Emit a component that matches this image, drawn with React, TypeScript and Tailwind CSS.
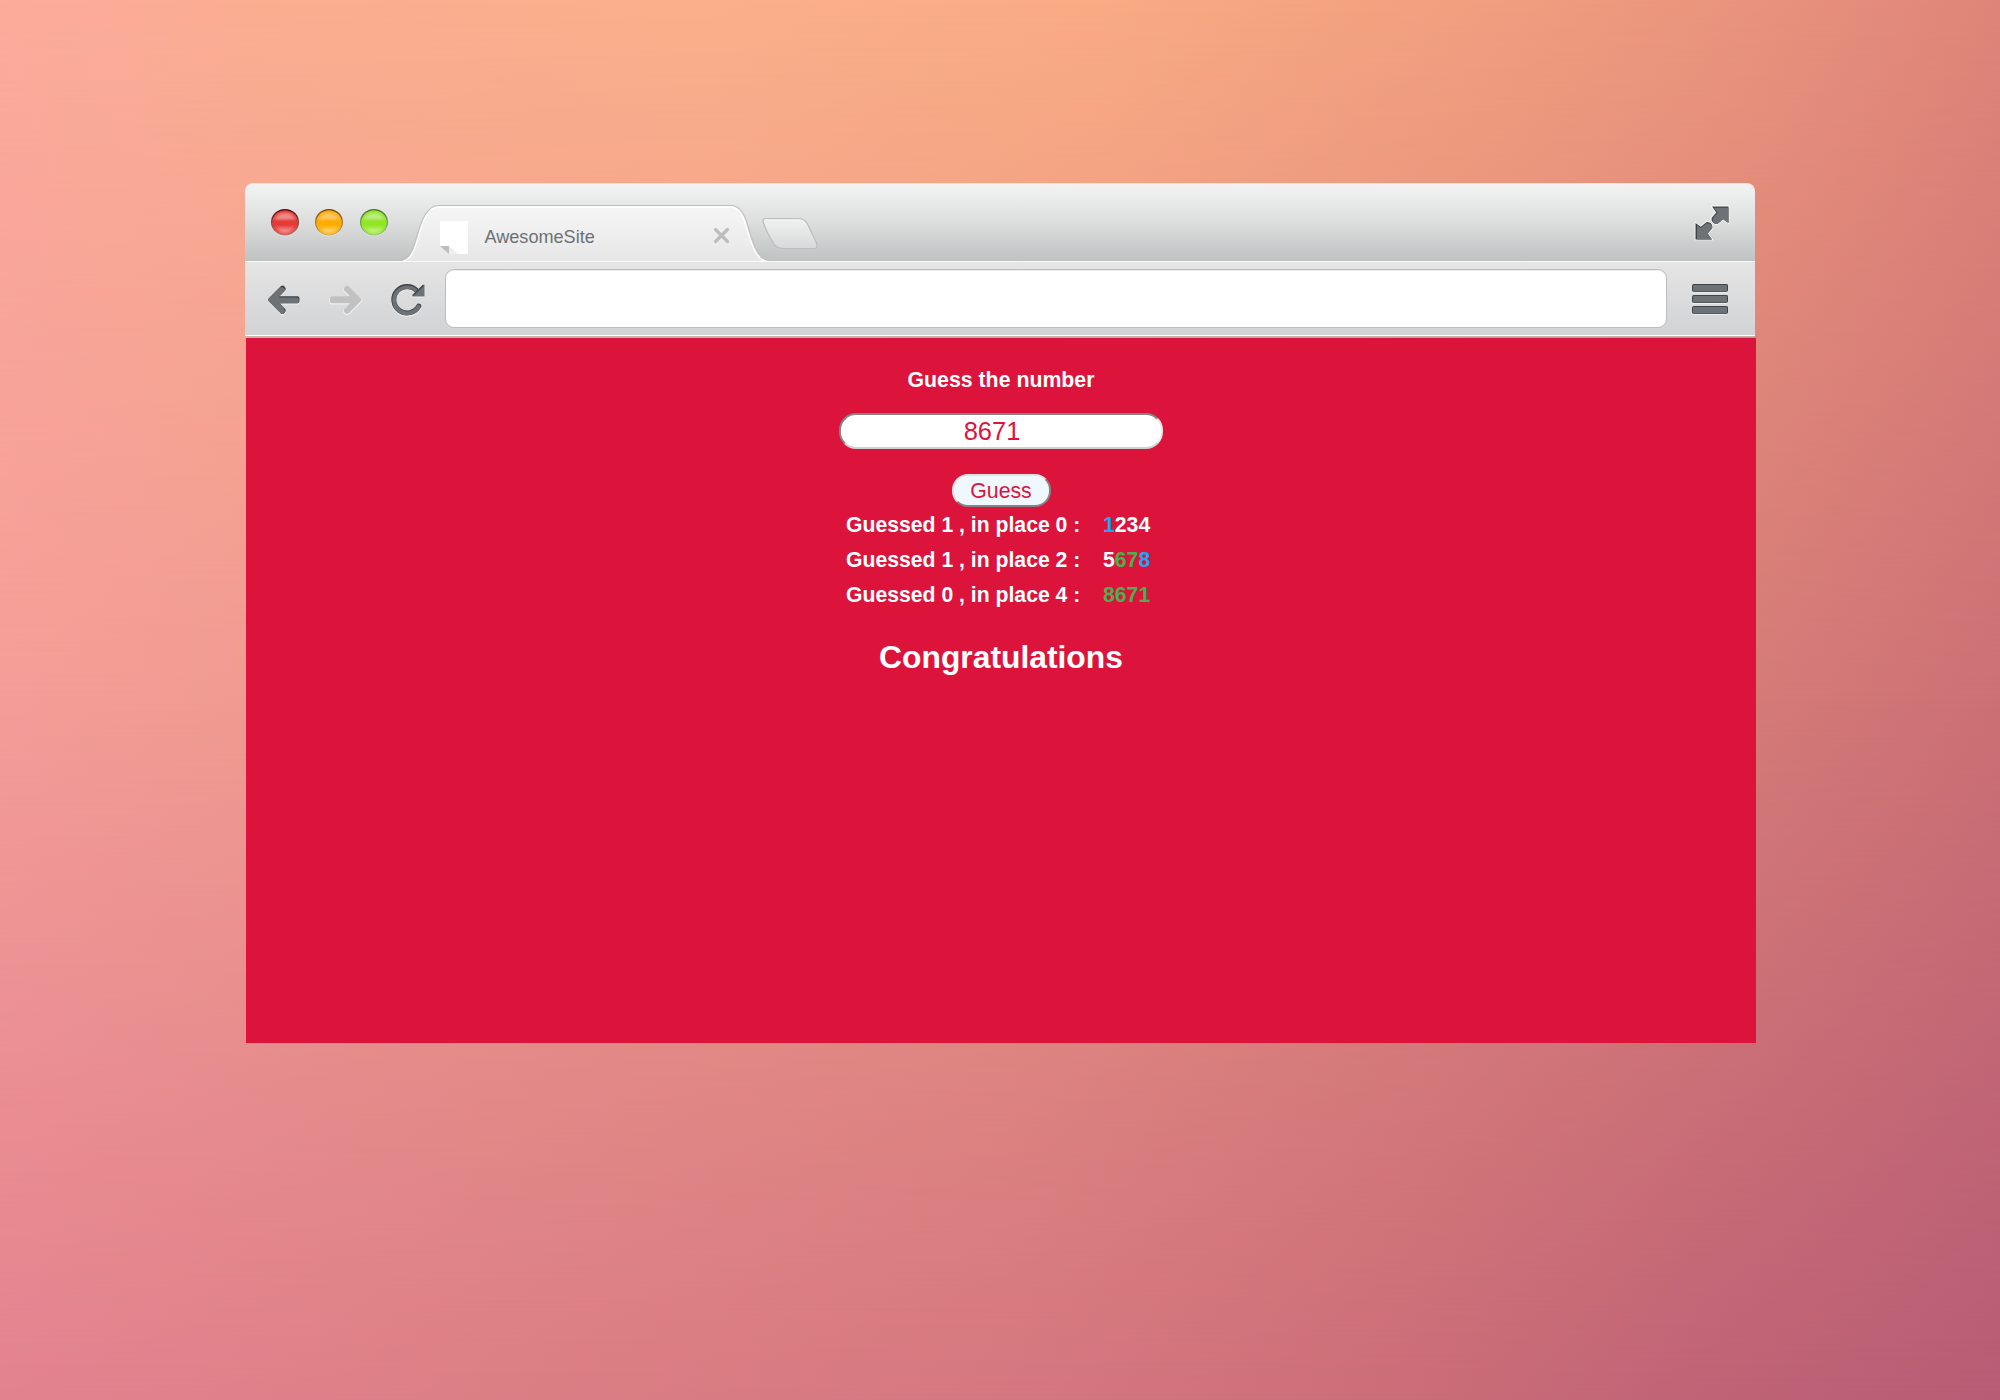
import React from "react";

type Tone = "white" | "blue" | "green";

const toneClass: Record<Tone, string> = {
  white: "text-white",
  blue: "text-[#1ea5fa]",
  green: "text-[#4caf50]",
};

const guesses: { label: string; digits: [string, Tone][] }[] = [
  { label: "Guessed 1 , in place 0 :", digits: [["1", "blue"], ["2", "white"], ["3", "white"], ["4", "white"]] },
  { label: "Guessed 1 , in place 2 :", digits: [["5", "white"], ["6", "green"], ["7", "green"], ["8", "blue"]] },
  { label: "Guessed 0 , in place 4 :", digits: [["8", "green"], ["6", "green"], ["7", "green"], ["1", "green"]] },
];

function Backdrop() {
  return (
    <div className="absolute inset-0">
      <div className="absolute inset-0 bg-[linear-gradient(90deg,#fcab9c_0%,#fbae92_12%,#fbb08b_35%,#f9ab84_55%,#f09e7f_75%,#e9937d_88%,#df8579_100%)]" />
      <div className="absolute inset-0 bg-[linear-gradient(90deg,#f49d98_0%,#ef9a90_15%,#e79282_50%,#d77d78_85%,#cc7075_100%)] [mask-image:linear-gradient(180deg,transparent_0%,black_50%)]" />
      <div className="absolute inset-0 bg-[linear-gradient(90deg,#e3828f_0%,#db7e85_25%,#d57780_50%,#cb6d78_70%,#c06376_85%,#b75c75_100%)] [mask-image:linear-gradient(180deg,transparent_50%,black_100%)]" />
    </div>
  );
}

function Light({ id, rim, rimLow, mid, top, glow }: { id: string; rim: string; rimLow: string; mid: string; top: string; glow: string }) {
  return (
    <svg width="28" height="28" viewBox="0 0 28 28">
      <defs>
        <linearGradient id={id + "r"} x1="0" y1="0" x2="0" y2="1">
          <stop offset="0" stopColor={rim} />
          <stop offset="1" stopColor={rimLow} />
        </linearGradient>
        <linearGradient id={id + "f"} x1="0" y1="0" x2="0" y2="1">
          <stop offset="0" stopColor={mid} />
          <stop offset="0.12" stopColor={top} />
          <stop offset="0.3" stopColor={top} />
          <stop offset="0.45" stopColor={mid} />
          <stop offset="0.6" stopColor={mid} />
          <stop offset="0.92" stopColor={glow} />
        </linearGradient>
        <radialGradient id={id + "v"}>
          <stop offset="0.65" stopColor={mid} stopOpacity="0" />
          <stop offset="1" stopColor={mid} stopOpacity="0.9" />
        </radialGradient>
      </defs>
      <ellipse cx="14" cy="14" rx="14" ry="13.4" fill="#fff" opacity="0.35" />
      <ellipse cx="14" cy="13.2" rx="14" ry="13.2" fill={`url(#${id}r)`} />
      <ellipse cx="14" cy="13.6" rx="12.6" ry="12" fill={`url(#${id}f)`} />
      <ellipse cx="14" cy="13.6" rx="12.6" ry="12" fill={`url(#${id}v)`} />
    </svg>
  );
}

function Tab() {
  return (
    <div className="relative ml-[8px] h-[58px] w-[374px] shrink-0">
      <svg className="absolute left-0 top-0" width="374" height="60" viewBox="395 204 374 60">
        <defs>
          <linearGradient id="tabFill" x1="0" y1="0" x2="0" y2="1">
            <stop offset="0" stopColor="#f6f6f6" />
            <stop offset="1" stopColor="#e6e6e6" />
          </linearGradient>
        </defs>
        <path d="M395 260.700 H398 C406 260.700 410 254 412.500 247 C417 235 418 225 424 215 C428 208 432 205.500 438 205.500 H730 C738 205.500 742 212 745 220 C749 232 751 243 756.500 252 C760 258 764 260.700 769 260.700 V264 H395Z" fill="url(#tabFill)" />
        <path d="M395 262 H398 C407 262 411.500 255 414 247.500 C418.500 235.500 419.500 226 425 216.500 C429 209 432.500 207 438 207 H730 C737 207 740.500 213 743.500 221 C747.500 233 749.500 244 755 253 C758.500 259 763 262 769 262" fill="none" stroke="#fff" strokeWidth="1.300" />
        <path d="M395 260.700 H398 C406 260.700 410 254 412.500 247 C417 235 418 225 424 215 C428 208 432 205.500 438 205.500 H730 C738 205.500 742 212 745 220 C749 232 751 243 756.500 252 C760 258 764 260.700 769 260.700" fill="none" stroke="#bdbdbd" strokeWidth="1.100" />
      </svg>
      <div className="relative flex h-full items-start pl-[44px]">
        <svg className="mt-[17px] shrink-0" width="28" height="33" viewBox="0 0 28 33">
          <path d="M0 0H28V33H17.500L9 25H0Z" fill="#fff" />
          <path d="M9 25L17.500 33H9Z" fill="#edf0ef" />
          <path d="M0 25H9V33Z" fill="#bdbebe" />
        </svg>
        <span className="ml-[17px] mt-[22px] w-[228px] text-[18.100px] leading-[22px] text-[#6b7175]">AwesomeSite</span>
        <svg className="mt-[23px] shrink-0" width="17" height="17" viewBox="0 0 17 17">
          <path d="M2.500 2.500L14.500 14.500M14.500 2.500L2.500 14.500" stroke="#bdbdbd" strokeWidth="3.200" strokeLinecap="round" />
        </svg>
      </div>
    </div>
  );
}

function NewTabButton() {
  return (
    <svg className="-ml-[9px] mt-[13px] shrink-0" width="58" height="34" viewBox="761 217 58 34">
      <defs>
        <linearGradient id="newTab" x1="0" y1="0" x2="0" y2="1">
          <stop offset="0" stopColor="#f1f1f1" />
          <stop offset="1" stopColor="#d7d9da" />
        </linearGradient>
      </defs>
      <path d="M766 218.500 H798 Q804.500 218.500 807.500 224 L816.500 243 Q818.500 248.500 814 248.500 H783 Q776 248.500 773 242.500 Q766 231 763.500 223 Q762 218.500 766 218.500Z" fill="url(#newTab)" stroke="#bcbcbc" strokeWidth="1.200" />
    </svg>
  );
}

function FullscreenIcon() {
  const up = "M16.500 0H33V16.500L27.600 12.700L22.200 17.200C19 18.200 15.200 15 16.200 11.200L20.800 5.900Z";
  const down = "M16.500 33H0V16.500L5.400 20.300L10.800 15.800C14 14.800 17.800 18 16.800 21.800L12.200 27.100Z";
  return (
    <svg width="36" height="36" viewBox="-1.500 -1.500 36 36">
      <path d={up} fill="#fff" stroke="#fff" strokeWidth="1.600" />
      <path d={down} fill="#fff" stroke="#fff" strokeWidth="1.600" />
      <path d={up} fill="#3c4044" />
      <path d={down} fill="#3c4044" />
      <path d="M18.500 1.300H33V16.500L27.600 12.700L22.200 17.200C19 18.200 16.800 15 17.200 11.700L22 6.200Z" fill="#6c7276" />
      <path d="M16.500 33H1.500V18.500L5.400 21.500L10.800 16.900C14 16 17.200 18.500 16.600 21.800L12.200 27.100Z" fill="#6c7276" />
    </svg>
  );
}

const ARROW = "M0.800 13.200L13 1Q14.800 -0.200 16.500 1.600Q18.600 3.600 17.400 5.200L11.600 11.200H29.500Q31.500 11.200 31.500 13.200V16.200Q31.500 18.200 29.500 18.200H11.600L17.400 24.300Q18.600 25.900 16.500 27.900Q14.800 29.700 13 28.500L0.800 16.300Q-0.500 14.750 0.800 13.200Z";

function BackIcon() {
  return (
    <svg width="34" height="33" viewBox="-1 -1 34 33">
      <defs>
        <clipPath id="backClip"><path d={ARROW} /></clipPath>
      </defs>
      <path d={ARROW} transform="translate(0 0.900)" fill="#f2f2f2" stroke="#f2f2f2" strokeWidth="0.800" />
      <path d={ARROW} fill="#3c4044" />
      <g clipPath="url(#backClip)">
        <path d={ARROW} transform="translate(-0.700 1.400)" fill="#6c7276" />
        <path d="M0 14H14L17 29H0Z" fill="#6c7276" />
      </g>
    </svg>
  );
}

function ForwardIcon() {
  return (
    <svg width="34" height="33" viewBox="-1 -1 34 33">
      <g transform="translate(31.500 0) scale(-1 1)">
        <path d={ARROW} transform="translate(0 0.700)" fill="#f0f0f0" stroke="#f0f0f0" strokeWidth="1.200" />
        <path d={ARROW} fill="#c1c1c1" />
      </g>
    </svg>
  );
}

function ReloadIcon() {
  const arc = "M26.800 22A13.300 13.300 0 1 1 25 6.800";
  const head = "M32.500 0.800V12.600H20.500V10.900L31 0.800Z";
  return (
    <svg width="35" height="34" viewBox="-1 -1 35 34">
      <g transform="translate(0 0.900)">
        <path d={arc} fill="none" stroke="#f2f2f2" strokeWidth="5.600" strokeLinecap="round" />
        <path d={head} fill="#f2f2f2" />
      </g>
      <path d={arc} fill="none" stroke="#3c4044" strokeWidth="5" strokeLinecap="round" />
      <path d="M26.600 22.500A13 13 0 1 1 25 7.800" fill="none" stroke="#6c7276" strokeWidth="3.800" strokeLinecap="round" />
      <path d={head} fill="#6c7276" />
      <path d="M20.800 11.500L31.500 1.300" stroke="#3c4044" strokeWidth="1.200" />
    </svg>
  );
}

function MenuIcon() {
  return (
    <div className="flex w-[36px] flex-col gap-[3px]">
      {[0, 1, 2].map((i) => (
        <div key={i} className="h-[8px] rounded-[2px] border border-b-[#55595c] border-[#3f4347] bg-[#6c7276] shadow-[0_1px_0_#ececec]" />
      ))}
    </div>
  );
}

function TabStrip() {
  return (
    <div className="flex h-[78px] rounded-t-[8px] border-t border-[#f4e6df] bg-linear-to-b from-[#f3f3f3] via-[#dcdedd] to-[#bfc2c2]">
      <div className="flex gap-[16.500px] pl-[25.500px] pt-[25px]">
        <Light id="lr" rim="#4a0608" rimLow="#b87573" mid="#e53a37" top="#ee8a87" glow="#f5aaa7" />
        <Light id="ly" rim="#744408" rimLow="#c9a564" mid="#ffab00" top="#fdc763" glow="#ffe08e" />
        <Light id="lg" rim="#47702c" rimLow="#9ab982" mid="#90e622" top="#b8ec80" glow="#cff79c" />
      </div>
      <div className="flex pt-[20px]">
        <Tab />
        <NewTabButton />
      </div>
      <div className="ml-auto pr-[25px] pt-[20.500px]">
        <FullscreenIcon />
      </div>
    </div>
  );
}

function Toolbar() {
  return (
    <div className="relative flex h-[76px] border-t border-[#fafafa] bg-linear-to-b from-[#e5e5e5] to-[#d1d2d4]">
      <div className="flex w-[200px] pl-[21.500px] pt-[21.500px]">
        <BackIcon />
        <div className="ml-[28px]"><ForwardIcon /></div>
        <div className="ml-[28px] -mt-[0.500px]"><ReloadIcon /></div>
      </div>
      <div className="mt-[7px] h-[59px] w-[1222px] rounded-[9px] border border-[#bdbdbf] bg-white shadow-[inset_0_1px_0_#ececec]" />
      <div className="ml-auto pr-[27px] pt-[22px]">
        <MenuIcon />
      </div>
      <div className="absolute inset-x-0 bottom-0 h-[2px] border-t border-white bg-[#c6b3ab]" />
    </div>
  );
}

function Game() {
  return (
    <div className="ml-[1px] mt-[1px] flex h-[705px] w-[1510px] flex-col items-center bg-[#dc143c] pt-[30px] text-white">
      <h1 className="text-[21.300px] leading-[24px] font-bold">Guess the number</h1>
      <div className="mt-[21px] flex h-[36px] w-[324px] items-center justify-center rounded-[17px] border-2 border-t-[#858585] border-l-[#858585] border-r-[#e8e8e8] border-b-[#d2d2d2] bg-white pr-[18px] text-[25.500px] leading-[30px] text-[#dc143c]">
        8671
      </div>
      <button className="mt-[25px] flex h-[33px] w-[99px] items-center justify-center rounded-[16px] border-2 border-t-[#e2e2e2] border-l-[#e2e2e2] border-r-[#858585] border-b-[#858585] bg-[#f0f8ff] text-[21.300px] leading-[24px] text-[#dc143c]">
        Guess
      </button>
      <div className="flex flex-col">
        {guesses.map((g) => (
          <div key={g.label} className="flex h-[35.400px] w-[310px] items-center text-[21.200px] leading-[24px] font-bold whitespace-pre">
            <span className="w-[257px]">{g.label}</span>
            <span>
              {g.digits.map(([d, tone], i) => (
                <span key={i} className={toneClass[tone]}>{d}</span>
              ))}
            </span>
          </div>
        ))}
      </div>
      <h2 className="mt-[26px] text-[31.800px] leading-[36px] font-bold">Congratulations</h2>
    </div>
  );
}

export default function App() {
  return (
    <div className="relative h-[1400px] w-[2000px] overflow-hidden font-['Liberation_Sans',Arial,sans-serif]">
      <Backdrop />
      <div className="relative ml-[245px] w-[1510px] pt-[183px]">
        <TabStrip />
        <Toolbar />
        <Game />
      </div>
    </div>
  );
}
